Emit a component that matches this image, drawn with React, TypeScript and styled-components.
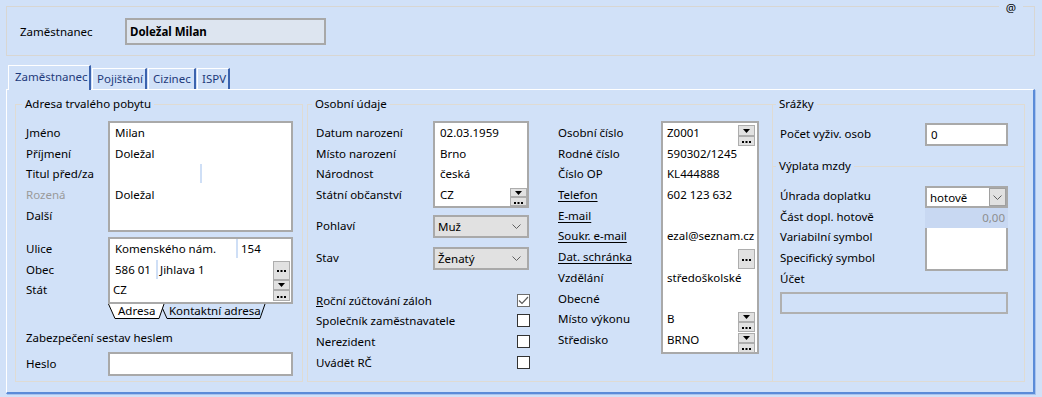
import styled, { createGlobalStyle } from 'styled-components'

const BG = '#d1e1f8'
const LINE = '#dfdbd3'
const EDGE = '#a9a9a9'
const ROW = 20.7

const Global = createGlobalStyle`
  html, body {
    margin: 0;
    padding: 0;
    background: ${BG};
  }
  body {
    font-family: "Noto Sans", "Open Sans", sans-serif;
    font-size: 11.5px;
    color: #000;
  }
  * {
    box-sizing: border-box;
  }
`

const Page = styled.div`
  width: 1042px;
  height: 397px;
  padding: 6px 0 0 6px;
  overflow: hidden;
`

const Header = styled.div`
  position: relative;
  width: 1029px;
  height: 50px;
  border: 1px solid #d8d6d2;
  display: flex;
  align-items: center;
  padding-left: 13px;
`

const HeaderLabel = styled.span`
  width: 105px;
`

const HeaderInput = styled.div`
  width: 201px;
  height: 27px;
  border: 2px solid #a8a8a8;
  background: #dde5f0;
  font-weight: bold;
  line-height: 23px;
  padding-left: 3px;
`

const AtSign = styled.span`
  position: absolute;
  top: -6px;
  right: 11px;
  padding: 0 7px;
  background: ${BG};
  line-height: 14px;
  font-size: 11.5px;
`

const TabStrip = styled.div`
  display: flex;
  align-items: flex-end;
  gap: 1px;
  height: 24px;
  margin-top: 9px;
  padding-left: 2px;
`

const Tab = styled.div<{ $w: number; $active?: boolean }>`
  position: relative;
  z-index: ${p => (p.$active ? 1 : 0)};
  width: ${p => p.$w}px;
  height: ${p => (p.$active ? 25 : 21)}px;
  margin-bottom: ${p => (p.$active ? -1 : 0)}px;
  padding-left: ${p => (p.$active ? 6 : 4)}px;
  line-height: ${p => (p.$active ? 22 : 19)}px;
  background: ${BG};
  border-top: 1px solid #fff;
  border-left: 1px solid #fff;
  border-right: 2px solid #3b63ae;
  color: #1e3a7b;
  white-space: nowrap;
`

const Panel = styled.div`
  width: 1029px;
  height: 305px;
  border-top: 1px solid #fff;
  border-left: 1px solid #fff;
  border-right: 2px solid #5b8bd8;
  border-bottom: 2px solid #5b8bd8;
  box-shadow: 1px 1px 0 #a8c3ee;
  display: flex;
  padding: 6px 8px 10px 8px;
`

const Group = styled.div<{ $w: number; $pl: number; $pr?: number; $ml?: number; $noRight?: boolean }>`
  flex-shrink: 0;
  width: ${p => p.$w}px;
  margin-top: 8px;
  margin-left: ${p => p.$ml ?? 0}px;
  border: 1px solid ${LINE};
  border-right: ${p => (p.$noRight ? 'none' : `1px solid ${LINE}`)};
  padding: 0 ${p => p.$pr ?? 0}px 0 ${p => p.$pl}px;
`

const Title = styled.div<{ $ml?: number }>`
  width: fit-content;
  margin: -9px 0 0 ${p => p.$ml ?? -4}px;
  padding: 0 3px;
  line-height: 16px;
  background: ${BG};
  white-space: nowrap;
`

const Separator = styled.div<{ $mt: number }>`
  margin: ${p => p.$mt}px -16px 0 -8px;
  border-top: 1px solid ${LINE};
`

const Section = styled.div<{ $mt?: number; $center?: boolean }>`
  display: flex;
  align-items: ${p => (p.$center ? 'center' : 'flex-start')};
  margin-top: ${p => p.$mt ?? 0}px;
`

const Columns = styled.div`
  display: flex;
  gap: 29px;
  margin-top: 9px;
`

const Col = styled.div<{ $w: number }>`
  width: ${p => p.$w}px;
`

const Labels = styled.div<{ $w: number; $pt?: number }>`
  width: ${p => p.$w}px;
  flex-shrink: 0;
  padding-top: ${p => p.$pt ?? 2}px;
  display: flex;
  flex-direction: column;
`

const Label = styled.div<{ $muted?: boolean; $u?: boolean; $w?: number }>`
  height: ${ROW}px;
  line-height: 19px;
  white-space: nowrap;
  flex-shrink: 0;
  width: ${p => (p.$w ? `${p.$w}px` : 'auto')};
  color: ${p => (p.$muted ? '#9a9a9a' : '#000')};
  text-decoration: ${p => (p.$u ? 'underline' : 'none')};
  text-underline-offset: 2px;
`

const PlainLine = styled.div<{ $mt?: number }>`
  margin-top: ${p => p.$mt ?? 0}px;
  line-height: 16px;
  white-space: nowrap;
`

const Box = styled.div<{ $w: number; $h: number }>`
  width: ${p => p.$w}px;
  height: ${p => p.$h}px;
  border: 2px solid ${EDGE};
  background: #fff;
  display: flex;
  flex-direction: column;
`

const Cell = styled.div<{ $pl?: number }>`
  display: flex;
  align-items: flex-start;
  height: ${ROW}px;
  flex-shrink: 0;
  line-height: 19px;
  padding-left: ${p => p.$pl ?? 5}px;
  white-space: nowrap;
`

const Part = styled.span<{ $w?: number; $sep?: boolean; $pl?: number }>`
  display: block;
  width: ${p => (p.$w ? `${p.$w}px` : 'auto')};
  height: 19px;
  padding-left: ${p => p.$pl ?? 0}px;
  border-left: ${p => (p.$sep ? '2px solid #cfdff6' : 'none')};
`

const Stack = styled.div<{ $mt: number; $mr: number }>`
  display: flex;
  flex-direction: column;
  margin: ${p => p.$mt}px ${p => p.$mr}px 0 auto;
`

const MiniBtn = styled.div<{ $h: number; $mt?: number; $mr?: number; $auto?: boolean }>`
  width: 17px;
  height: ${p => p.$h}px;
  margin-top: ${p => p.$mt ?? 0}px;
  margin-right: ${p => p.$mr ?? 0}px;
  margin-left: ${p => (p.$auto ? 'auto' : '0')};
  background: #e1e1e1;
  border: 1px solid #adadad;
  display: flex;
  align-items: center;
  justify-content: center;
  flex-shrink: 0;
`

const Combo = styled.div<{ $w: number; $h: number; $white?: boolean }>`
  width: ${p => p.$w}px;
  height: ${p => p.$h}px;
  border: 2px solid ${EDGE};
  background: ${p => (p.$white ? '#fff' : '#e1e1e1')};
  display: flex;
  align-items: center;
  justify-content: space-between;
  padding: 0 ${p => (p.$white ? 0 : 6)}px 0 3px;
  white-space: nowrap;
`

const ComboBtn = styled.div`
  width: 17px;
  height: 100%;
  background: #e1e1e1;
  border: 1px solid #a0a0a0;
  display: flex;
  align-items: center;
  justify-content: center;
`

const FieldRow = styled.div<{ $mt: number; $h: number }>`
  display: flex;
  align-items: center;
  height: ${p => p.$h}px;
  margin-top: ${p => p.$mt}px;
`

const Input = styled.div<{ $w: number; $h: number; $mt?: number; $clear?: boolean }>`
  width: ${p => p.$w}px;
  height: ${p => p.$h}px;
  margin-top: ${p => p.$mt ?? 0}px;
  border: 2px solid ${p => (p.$clear ? '#b0b0b0' : EDGE)};
  background: ${p => (p.$clear ? 'transparent' : '#fff')};
  line-height: 19px;
  padding-left: 4px;
`

const Checks = styled.div<{ $mt: number }>`
  margin-top: ${p => p.$mt}px;
`

const CheckRow = styled.div`
  display: flex;
  align-items: center;
  justify-content: space-between;
  height: ${ROW}px;
  white-space: nowrap;
`

const CheckBox = styled.div<{ $checked?: boolean }>`
  width: 13px;
  height: 13px;
  margin-right: -1px;
  border: 1px solid ${p => (p.$checked ? '#6e6e6e' : '#333')};
  background: #fff;
  display: flex;
  align-items: center;
  justify-content: center;
`

const AddrTabs = styled.div`
  display: flex;
  height: 15px;
  margin-left: 82px;
`

const AddrTab = styled.div<{ $w: number; $pl: number; $front?: boolean; $ml?: number }>`
  position: relative;
  z-index: ${p => (p.$front ? 2 : 1)};
  width: ${p => p.$w}px;
  height: 15px;
  margin-left: ${p => p.$ml ?? 0}px;
  padding-left: ${p => p.$pl}px;
  line-height: 13px;
  white-space: nowrap;

  svg {
    position: absolute;
    left: 0;
    top: 0;
    z-index: -1;
  }
`

const PayCol = styled.div`
  width: 83px;
  display: flex;
  flex-direction: column;
`

const ReadOnly = styled.div`
  height: 20px;
  background: #c8d8f2;
  color: #8e8e8e;
  text-align: right;
  padding-right: 3px;
  line-height: 19px;
`

const SymbolBox = styled.div`
  height: 43px;
  background: #fff;
  border: 2px solid ${EDGE};
  border-top: none;
`

const Dots = () => (
  <svg width="9" height="3" viewBox="0 0 9 3" style={{ marginTop: 3 }}>
    <rect x="0" y="0" width="2" height="2" fill="#000" />
    <rect x="3.5" y="0" width="2" height="2" fill="#000" />
    <rect x="7" y="0" width="2" height="2" fill="#000" />
  </svg>
)

const Tri = () => (
  <svg width="7" height="4" viewBox="0 0 7 4">
    <polygon points="0,0 7,0 3.5,4" fill="#000" />
  </svg>
)

const Chevron = () => (
  <svg width="9" height="5" viewBox="0 0 9 5">
    <polyline points="0.5,0.5 4.5,4.5 8.5,0.5" fill="none" stroke="#606060" strokeWidth="1" />
  </svg>
)

const Check = () => (
  <svg width="11" height="9" viewBox="0 0 11 9">
    <polyline points="1,4.5 4,7.5 10,1" fill="none" stroke="#5a5a5a" strokeWidth="1.2" />
  </svg>
)

const TabShape = ({ w, fill }: { w: number; fill: string }) => (
  <svg width={w} height="15" viewBox={`0 0 ${w} 15`}>
    <polygon points={`0,0 7,14.5 ${w - 6},14.5 ${w - 1},0`} fill={fill} />
    <polyline points={`0.5,0 7,14.5 ${w - 6},14.5 ${w - 1},0`} fill="none" stroke="#000" strokeWidth="1" />
  </svg>
)

const StackBtns = ({ mt, mr, top, bottom }: { mt: number; mr: number; top: number; bottom: number }) => (
  <Stack $mt={mt} $mr={mr}>
    <MiniBtn $h={top}><Tri /></MiniBtn>
    <MiniBtn $h={bottom}><Dots /></MiniBtn>
  </Stack>
)

const AddressGroup = () => (
  <Group $w={288} $pl={10}>
    <Title>Adresa trvalého pobytu</Title>
    <Section $mt={9}>
      <Labels $w={82}>
        <Label>Jméno</Label>
        <Label>Příjmení</Label>
        <Label>Titul před/za</Label>
        <Label $muted>Rozená</Label>
        <Label>Další</Label>
      </Labels>
      <Box $w={185} $h={111}>
        <Cell>Milan</Cell>
        <Cell>Doležal</Cell>
        <Cell>
          <Part $w={85} />
          <Part $sep />
        </Cell>
        <Cell>Doležal</Cell>
        <Cell />
      </Box>
    </Section>
    <Section $mt={5}>
      <Labels $w={82}>
        <Label>Ulice</Label>
        <Label>Obec</Label>
        <Label>Stát</Label>
      </Labels>
      <Box $w={185} $h={67}>
        <Cell>
          <Part $w={121}>Komenského nám.</Part>
          <Part $sep $pl={3}>154</Part>
        </Cell>
        <Cell>
          <Part $w={41}>586 01</Part>
          <Part $sep $pl={2}>Jihlava 1</Part>
          <MiniBtn $h={19} $mt={1} $mr={1} $auto><Dots /></MiniBtn>
        </Cell>
        <Cell $pl={3}>
          CZ
          <StackBtns mt={0} mr={1} top={10} bottom={11} />
        </Cell>
      </Box>
    </Section>
    <AddrTabs>
      <AddrTab $w={57} $pl={10} $front>
        <TabShape w={57} fill="#fff" />
        Adresa
      </AddrTab>
      <AddrTab $w={106} $pl={9} $ml={-5}>
        <TabShape w={106} fill={BG} />
        Kontaktní adresa
      </AddrTab>
    </AddrTabs>
    <PlainLine $mt={11}>Zabezpečení sestav heslem</PlainLine>
    <Section $mt={6} $center>
      <Label $w={82}>Heslo</Label>
      <Input $w={185} $h={24} />
    </Section>
  </Group>
)

const PersonalGroup = () => (
  <Group $w={465} $pl={8} $ml={4} $noRight>
    <Title>Osobní údaje</Title>
    <Columns>
      <Col $w={213}>
        <Section>
          <Labels $w={117}>
            <Label>Datum narození</Label>
            <Label>Místo narození</Label>
            <Label>Národnost</Label>
            <Label>Státní občanství</Label>
          </Labels>
          <Box $w={96} $h={87}>
            <Cell $pl={5}>02.03.1959</Cell>
            <Cell $pl={5}>Brno</Cell>
            <Cell $pl={5}>česká</Cell>
            <Cell $pl={5}>
              CZ
              <StackBtns mt={3} mr={0} top={9} bottom={9} />
            </Cell>
          </Box>
        </Section>
        <FieldRow $mt={7} $h={23}>
          <Label $w={117}>Pohlaví</Label>
          <Combo $w={96} $h={23}>Muž<Chevron /></Combo>
        </FieldRow>
        <FieldRow $mt={9} $h={23}>
          <Label $w={117}>Stav</Label>
          <Combo $w={96} $h={23}>Ženatý<Chevron /></Combo>
        </FieldRow>
        <Checks $mt={19.7}>
          <CheckRow>
            <span><u>R</u>oční zúčtování záloh</span>
            <CheckBox $checked><Check /></CheckBox>
          </CheckRow>
          <CheckRow>
            <span>Společník zaměstnavatele</span>
            <CheckBox />
          </CheckRow>
          <CheckRow>
            <span>Nerezident</span>
            <CheckBox />
          </CheckRow>
          <CheckRow>
            <span>Uvádět RČ</span>
            <CheckBox />
          </CheckRow>
        </Checks>
      </Col>
      <Col $w={201}>
        <Section>
          <Labels $w={103}>
            <Label>Osobní číslo</Label>
            <Label>Rodné číslo</Label>
            <Label>Číslo OP</Label>
            <Label $u>Telefon</Label>
            <Label $u>E-mail</Label>
            <Label $u>Soukr. e-mail</Label>
            <Label $u>Dat. schránka</Label>
            <Label>Vzdělání</Label>
            <Label>Obecné</Label>
            <Label>Místo výkonu</Label>
            <Label>Středisko</Label>
          </Labels>
          <Box $w={98} $h={233}>
            <Cell $pl={4}>
              Z0001
              <StackBtns mt={2} mr={2} top={11} bottom={10} />
            </Cell>
            <Cell $pl={4}>590302/1245</Cell>
            <Cell $pl={4}>KL444888</Cell>
            <Cell $pl={4}>602 123 632</Cell>
            <Cell $pl={4} />
            <Cell $pl={4}>ezal@seznam.cz</Cell>
            <Cell $pl={4}>
              <MiniBtn $h={20} $mt={2} $mr={2} $auto><Dots /></MiniBtn>
            </Cell>
            <Cell $pl={4}>středoškolské</Cell>
            <Cell $pl={4} />
            <Cell $pl={4}>
              B
              <StackBtns mt={3} mr={2} top={10} bottom={10} />
            </Cell>
            <Cell $pl={4}>
              BRNO
              <StackBtns mt={3} mr={2} top={10} bottom={10} />
            </Cell>
          </Box>
        </Section>
      </Col>
    </Columns>
  </Group>
)

const DeductionGroup = () => (
  <Group $w={253} $pl={7} $pr={16}>
    <Title>Srážky</Title>
    <FieldRow $mt={11} $h={23}>
      <Label $w={145}>Počet vyživ. osob</Label>
      <Input $w={83} $h={23}>0</Input>
    </FieldRow>
    <Separator $mt={20}>
      <Title $ml={4}>Výplata mzdy</Title>
    </Separator>
    <Section $mt={12}>
      <Labels $w={145} $pt={0}>
        <Label>Úhrada doplatku</Label>
        <Label>Část dopl. hotově</Label>
        <Label>Variabilní symbol</Label>
        <Label>Specifický symbol</Label>
      </Labels>
      <PayCol>
        <Combo $w={83} $h={22} $white>
          hotově
          <ComboBtn><Chevron /></ComboBtn>
        </Combo>
        <ReadOnly>0,00</ReadOnly>
        <SymbolBox />
      </PayCol>
    </Section>
    <PlainLine>Účet</PlainLine>
    <Input $w={228} $h={22} $mt={5} $clear />
  </Group>
)

export default function App() {
  return (
    <Page>
      <Global />
      <Header>
        <HeaderLabel>Zaměstnanec</HeaderLabel>
        <HeaderInput>Doležal Milan</HeaderInput>
        <AtSign>@</AtSign>
      </Header>
      <TabStrip>
        <Tab $w={83} $active>Zaměstnanec</Tab>
        <Tab $w={55}>Pojištění</Tab>
        <Tab $w={48}>Cizinec</Tab>
        <Tab $w={33}>ISPV</Tab>
      </TabStrip>
      <Panel>
        <AddressGroup />
        <PersonalGroup />
        <DeductionGroup />
      </Panel>
    </Page>
  )
}
